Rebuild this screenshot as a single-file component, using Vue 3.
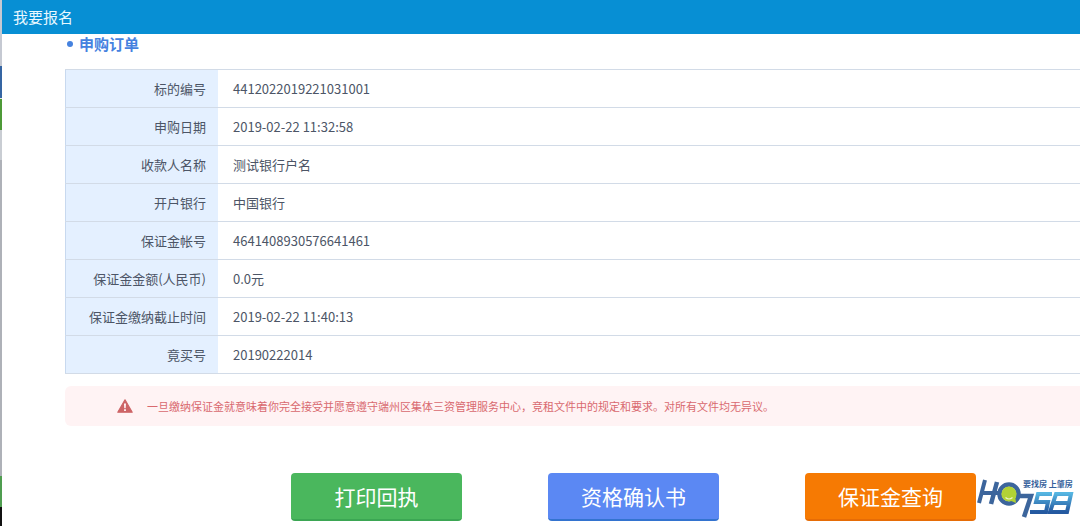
<script setup>
const rows = [
  ['标的编号', '4412022019221031001'],
  ['申购日期', '2019-02-22 11:32:58'],
  ['收款人名称', '测试银行户名'],
  ['开户银行', '中国银行'],
  ['保证金帐号', '4641408930576641461'],
  ['保证金金额(人民币)', '0.0元'],
  ['保证金缴纳截止时间', '2019-02-22 11:40:13'],
  ['竟买号', '20190222014'],
]
const actions = [
  { label: '打印回执', tone: 'green' },
  { label: '资格确认书', tone: 'blue' },
  { label: '保证金查询', tone: 'orange' },
]
</script>

<template>
  <div class="page">
    <header class="bar">我要报名</header>
    <main class="content">
      <h1 class="heading"><span class="dot"></span>申购订单</h1>
      <table class="order">
        <tbody>
          <tr v-for="row in rows" :key="row[0]">
            <th scope="row">{{ row[0] }}</th>
            <td>{{ row[1] }}</td>
          </tr>
        </tbody>
      </table>
      <p class="notice">
        <svg class="warn" viewBox="0 0 16 14" aria-hidden="true">
          <path d="M8 .8 15.2 13.2H.8Z" fill="#cd6466" stroke="#cd6466" stroke-width="1.2" stroke-linejoin="round" />
          <path d="M7 4.4h2l-.3 4.8H7.3Z" fill="#fff4f5" />
          <rect x="7.1" y="10.2" width="1.8" height="1.8" fill="#fff4f5" />
        </svg>
        <span>一旦缴纳保证金就意味着你完全接受并愿意遵守端州区集体三资管理服务中心，竞租文件中的规定和要求。对所有文件均无异议。</span>
      </p>
      <div class="actions">
        <button v-for="a in actions" :key="a.label" type="button" :class="a.tone">{{ a.label }}</button>
      </div>
    </main>
    <svg class="logo" viewBox="0 0 104 48" role="img" aria-label="HO758 要找房 上肇房">
      <defs>
        <linearGradient id="fade" gradientUnits="userSpaceOnUse" x1="0" y1="17" x2="0" y2="40">
          <stop offset="0.1" stop-color="#56b6e2" />
          <stop offset="0.9" stop-color="#2459a0" />
        </linearGradient>
      </defs>
      <g fill="none" stroke="#3c659c">
        <path d="M11 6 5 29M7 19H27" stroke-width="4" />
        <path d="M23 8 17 30" stroke-width="4.5" />
        <circle cx="35" cy="20" r="9.5" stroke-width="4.5" />
        <path d="M42 22H57L50 43" stroke-width="4.5" />
      </g>
      <circle cx="35" cy="20" r="7.6" fill="#b2d235" />
      <path d="M35 26 42 29 41 21Z" fill="#b2d235" />
      <path d="M31.500 23.500q3.500 3 7 0" fill="none" stroke="#eef6c8" stroke-width="1.2" />
      <g fill="none" stroke="url(#fade)" stroke-width="4">
        <path d="M78 20H64L62 28H74L72 38H56" />
        <path d="M82 20H97L93 38H76ZM79 29H95" />
      </g>
      <text x="49" y="13" class="slogan">要找房 上肇房</text>
    </svg>
  </div>
</template>

<style>
body { margin: 0; background: #fff; }
</style>

<style scoped>
.page {
  position: relative;
  box-sizing: border-box;
  min-height: 100vh;
  padding-left: 2px;
  overflow: hidden;
  color: #4c5566;
  font-family: "Noto Sans CJK SC", sans-serif;
  background: linear-gradient(#c5c9d2 66px, #3565a3 66px 98px, #e8e8e8 98px 99px, #4e9a38 99px 130px, #c9cdd3 130px 160px, #aeb1b8 160px 476px, #4f9d50 476px 507px, #111 507px) left / 2px 100% no-repeat #fff;
}
.bar {
  height: 34px;
  padding-left: 11px;
  background: #078fd4;
  color: #e9f8ff;
  font-size: 15px;
  line-height: 34px;
}
.content { padding-left: 63px; }
.heading {
  display: flex;
  align-items: center;
  gap: 6px;
  margin: 0 0 15px;
  padding-left: 2px;
  color: #4582df;
  font-size: 15px;
  font-weight: 700;
  line-height: 20px;
}
.dot { width: 6px; height: 6px; border-radius: 50%; background: #4582df; }
.order {
  width: 100%;
  border-collapse: collapse;
  border-left: 1px solid #c8d9ef;
  table-layout: fixed;
  font-size: 13px;
  line-height: 18px;
}
.order th, .order td {
  height: 37px;
  padding: 0 12px 0 15px;
  border-top: 1px solid #d2dbe7;
  border-bottom: 1px solid #d2dbe7;
  font-weight: 400;
  text-align: left;
}
.order th {
  width: 125px;
  background: #e4f0ff;
  text-align: right;
}
.notice {
  display: flex;
  align-items: center;
  gap: 14px;
  height: 40px;
  margin: 12px 0 47px;
  padding-left: 52px;
  border-radius: 6px 0 0 6px;
  background: #fff3f4;
  color: #d9696f;
  font-size: 11px;
  white-space: nowrap;
}
.warn { width: 16px; height: 14px; }
.actions { display: flex; gap: 86px; padding-left: 226px; }
.actions button {
  flex: none;
  width: 171px;
  height: 48px;
  padding: 0;
  border: 0;
  border-bottom: 2px solid;
  border-radius: 4px;
  color: #fff;
  font-family: inherit;
  font-size: 21px;
  line-height: 44px;
  cursor: pointer;
}
.actions .green { background: #4ab75d; border-color: #3ba653; }
.actions .blue { background: #5b88f3; border-color: #3373cf; }
.actions .orange { background: #f67a03; border-color: #e66c06; }
.logo { position: absolute; right: 2px; bottom: 4px; width: 104px; height: 48px; }
.slogan { fill: #355f9b; font-size: 8px; font-weight: 700; }
</style>
